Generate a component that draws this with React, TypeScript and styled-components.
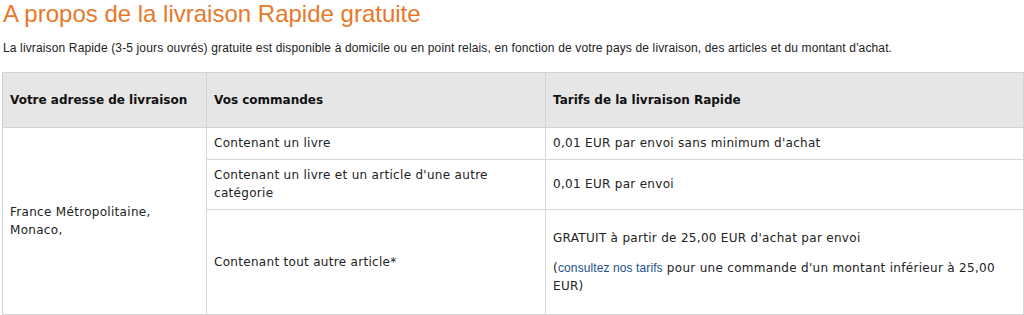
import React from "react";
import styled, { createGlobalStyle } from "styled-components";

const GlobalStyle = createGlobalStyle`
  html, body {
    margin: 0;
    padding: 0;
    background: #ffffff;
    overflow: hidden;
  }
  body {
    font-family: "Liberation Sans", Arial, sans-serif;
    color: #222222;
  }
`;

const Page = styled.div`
  padding: 0 0 0 2px;
  width: 1022px;
`;

const Title = styled.h1`
  margin: 0 0 14px 1px;
  font-family: "Liberation Sans", Arial, sans-serif;
  font-size: 24px;
  font-weight: normal;
  line-height: 27px;
  color: #e8782a;
`;

const Intro = styled.p`
  margin: 0 0 17px 1px;
  font-size: 12px;
  line-height: 14px;
  letter-spacing: 0.14px;
  color: #222222;
`;

const Table = styled.table`
  width: 1022px;
  border-collapse: collapse;
  table-layout: fixed;
  font-family: "DejaVu Sans", Verdana, sans-serif;
  font-size: 12px;
  line-height: 18px;
  color: #222222;
`;

const Th = styled.th`
  background: #e6e6e6;
  border: 1px solid #d2d2d2;
  padding: 18px 7px 18px 7px;
  text-align: left;
  font-weight: bold;
  color: #111111;
`;

const Td = styled.td`
  border: 1px solid #d6d6d6;
  padding: 6px 7px 7px 7px;
  vertical-align: middle;
  text-align: left;
  letter-spacing: 0.3px;
`;

const Para = styled.p`
  margin: 12px 0;

  &:first-child {
    margin-top: 13px;
  }
`;

const Link = styled.a`
  font-family: "Liberation Sans", Arial, sans-serif;
  line-height: 12px;
  letter-spacing: 0.1px;
  color: #22508f;
  text-decoration: none;
`;

export default function App() {
  return (
    <>
      <GlobalStyle />
      <Page>
        <Title>A propos de la livraison Rapide gratuite</Title>
        <Intro>
          La livraison Rapide (3-5 jours ouvrés) gratuite est disponible à
          domicile ou en point relais, en fonction de votre pays de livraison,
          des articles et du montant d'achat.
        </Intro>
        <Table>
          <colgroup>
            <col style={{ width: 204 }} />
            <col style={{ width: 339 }} />
            <col />
          </colgroup>
          <thead>
            <tr>
              <Th>Votre adresse de livraison</Th>
              <Th>Vos commandes</Th>
              <Th>Tarifs de la livraison Rapide</Th>
            </tr>
          </thead>
          <tbody>
            <tr>
              <Td rowSpan={3}>
                France Métropolitaine,
                <br />
                Monaco,
              </Td>
              <Td>Contenant un livre</Td>
              <Td>0,01 EUR par envoi sans minimum d'achat</Td>
            </tr>
            <tr>
              <Td>
                Contenant un livre et un article d'une autre
                <br />
                catégorie
              </Td>
              <Td>0,01 EUR par envoi</Td>
            </tr>
            <tr>
              <Td>Contenant tout autre article*</Td>
              <Td>
                <Para>GRATUIT à partir de 25,00 EUR d'achat par envoi</Para>
                <Para>
                  (<Link href="#">consultez nos tarifs</Link> pour une commande
                  d'un montant inférieur à 25,00 EUR)
                </Para>
              </Td>
            </tr>
          </tbody>
        </Table>
      </Page>
    </>
  );
}
